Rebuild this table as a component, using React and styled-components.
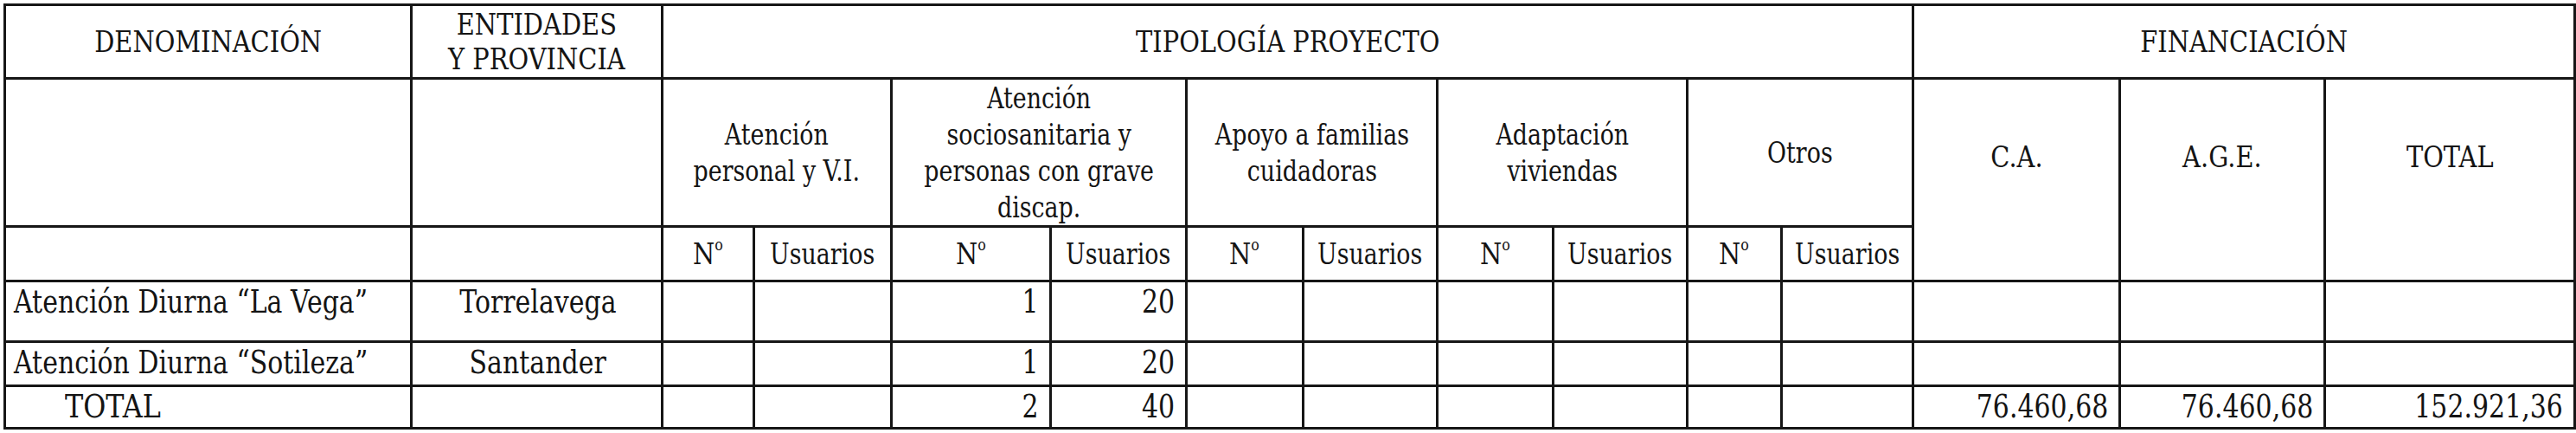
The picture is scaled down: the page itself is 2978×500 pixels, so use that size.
import React from 'react';
import styled, { createGlobalStyle } from 'styled-components';

const Global = createGlobalStyle`
  html, body { margin: 0; padding: 0; background: #fff; }
  body {
    font-family: "DejaVu Serif", "Liberation Serif", serif;
    color: #141414;
  }
`;

const Sheet = styled.table`
  border-collapse: collapse;
  table-layout: fixed;
  width: 2971px;
  margin: 4px 0 0 4px;
  font-family: "DejaVu Serif", "Liberation Serif", serif;
  line-height: 42px;
  color: #141414;
`;

const Col = styled.col`
  width: ${p => p.$w}px;
`;

const Row = styled.tr`
  height: ${p => p.$h}px;
`;

const HeadCell = styled.th`
  border: 3px solid #161616;
  font-weight: normal;
  font-family: inherit;
  font-size: 34px;
  padding: ${p => p.$padTop || 0}px 4px 0;
  text-align: center;
  vertical-align: ${p => (p.$padTop ? 'top' : 'middle')};
  white-space: nowrap;
  overflow: hidden;
`;

const Cell = styled.td`
  border: 3px solid #161616;
  font-family: inherit;
  font-size: 37px;
  padding: 2px ${p => (p.$align === 'right' ? 12 : 6)}px 0 ${p => p.$indent ?? 9}px;
  text-align: ${p => p.$align || 'left'};
  vertical-align: top;
  white-space: nowrap;
  overflow: hidden;
`;

// the scanned typeface is a condensed schoolbook face, so squeeze the glyphs;
// negative margins keep the unscaled box from overflowing the cell
const margins = {
  center: '0 -60px',
  left: '0 -120px 0 0',
  right: '0 0 0 -120px',
};

const Fit = styled.span`
  display: inline-block;
  transform: scaleX(${p => p.$sx ?? 1});
  transform-origin: ${p => p.$origin || 'center'};
  margin: ${p => margins[p.$origin || 'center']};
  line-height: ${p => p.$lh || 42}px;
`;

const Ord = styled.span`
  font-size: 0.55em;
  vertical-align: 0.85em;
  line-height: 0;
`;

const CAPS = 0.85;
const MIXED = 0.79;
const DATA = 0.81;

const widths = [470, 290, 106, 159, 184, 157, 135, 155, 134, 155, 109, 152, 239, 237, 289];

const groups = [
  ['Atención', 'personal y V.I.'],
  ['Atención', 'sociosanitaria y', 'personas con grave', 'discap.'],
  ['Apoyo a familias', 'cuidadoras'],
  ['Adaptación', 'viviendas'],
  ['Otros'],
];

const rows = [
  { name: 'Atención Diurna “La Vega”', place: 'Torrelavega', n: '1', users: '20', h: 70 },
  { name: 'Atención Diurna “Sotileza”', place: 'Santander', n: '1', users: '20', h: 51 },
];

const Value = ({ align = 'left', indent, sx = DATA, children }) => (
  <Cell $align={align} $indent={indent}>
    {children && (
      <Fit $sx={sx} $origin={align}>
        {children}
      </Fit>
    )}
  </Cell>
);

const Lines = ({ lines }) =>
  lines.map((l, i) => (
    <React.Fragment key={i}>
      {i > 0 && <br />}
      {l}
    </React.Fragment>
  ));

const Num = () => (
  <HeadCell>
    <Fit $sx={0.85}>
      N<Ord>o</Ord>
    </Fit>
  </HeadCell>
);

const TypeCells = ({ n, users }) => (
  <>
    <Cell />
    <Cell />
    <Value align="right">{n}</Value>
    <Value align="right">{users}</Value>
    {Array.from({ length: 6 }).map((_, i) => (
      <Cell key={i} />
    ))}
  </>
);

export default function App() {
  return (
    <>
      <Global />
      <Sheet>
        <colgroup>
          {widths.map((w, i) => (
            <Col key={i} $w={w} />
          ))}
        </colgroup>
        <tbody>
          <Row $h={85}>
            <HeadCell>
              <Fit $sx={CAPS}>DENOMINACIÓN</Fit>
            </HeadCell>
            <HeadCell>
              <Fit $sx={CAPS} $lh={40}>
                ENTIDADES
                <br />Y PROVINCIA
              </Fit>
            </HeadCell>
            <HeadCell colSpan={10}>
              <Fit $sx={CAPS}>TIPOLOGÍA PROYECTO</Fit>
            </HeadCell>
            <HeadCell colSpan={3}>
              <Fit $sx={CAPS}>FINANCIACIÓN</Fit>
            </HeadCell>
          </Row>
          <Row $h={171}>
            <Cell />
            <Cell />
            {groups.map((g, i) => (
              <HeadCell key={i} colSpan={2}>
                <Fit $sx={MIXED}>
                  <Lines lines={g} />
                </Fit>
              </HeadCell>
            ))}
            <HeadCell rowSpan={2} $padTop={68}>
              <Fit $sx={CAPS}>C.A.</Fit>
            </HeadCell>
            <HeadCell rowSpan={2} $padTop={68}>
              <Fit $sx={CAPS}>A.G.E.</Fit>
            </HeadCell>
            <HeadCell rowSpan={2} $padTop={68}>
              <Fit $sx={CAPS}>TOTAL</Fit>
            </HeadCell>
          </Row>
          <Row $h={63}>
            <Cell />
            <Cell />
            {groups.map((_, i) => (
              <React.Fragment key={i}>
                <Num />
                <HeadCell>
                  <Fit $sx={MIXED}>Usuarios</Fit>
                </HeadCell>
              </React.Fragment>
            ))}
          </Row>
          {rows.map(r => (
            <Row key={r.name} $h={r.h}>
              <Value>{r.name}</Value>
              <Value align="center">{r.place}</Value>
              <TypeCells n={r.n} users={r.users} />
              <Cell />
              <Cell />
              <Cell />
            </Row>
          ))}
          <Row $h={49}>
            <Value indent={68} sx={0.86}>
              TOTAL
            </Value>
            <Cell />
            <TypeCells n="2" users="40" />
            <Value align="right">76.460,68</Value>
            <Value align="right">76.460,68</Value>
            <Value align="right">152.921,36</Value>
          </Row>
        </tbody>
      </Sheet>
    </>
  );
}
